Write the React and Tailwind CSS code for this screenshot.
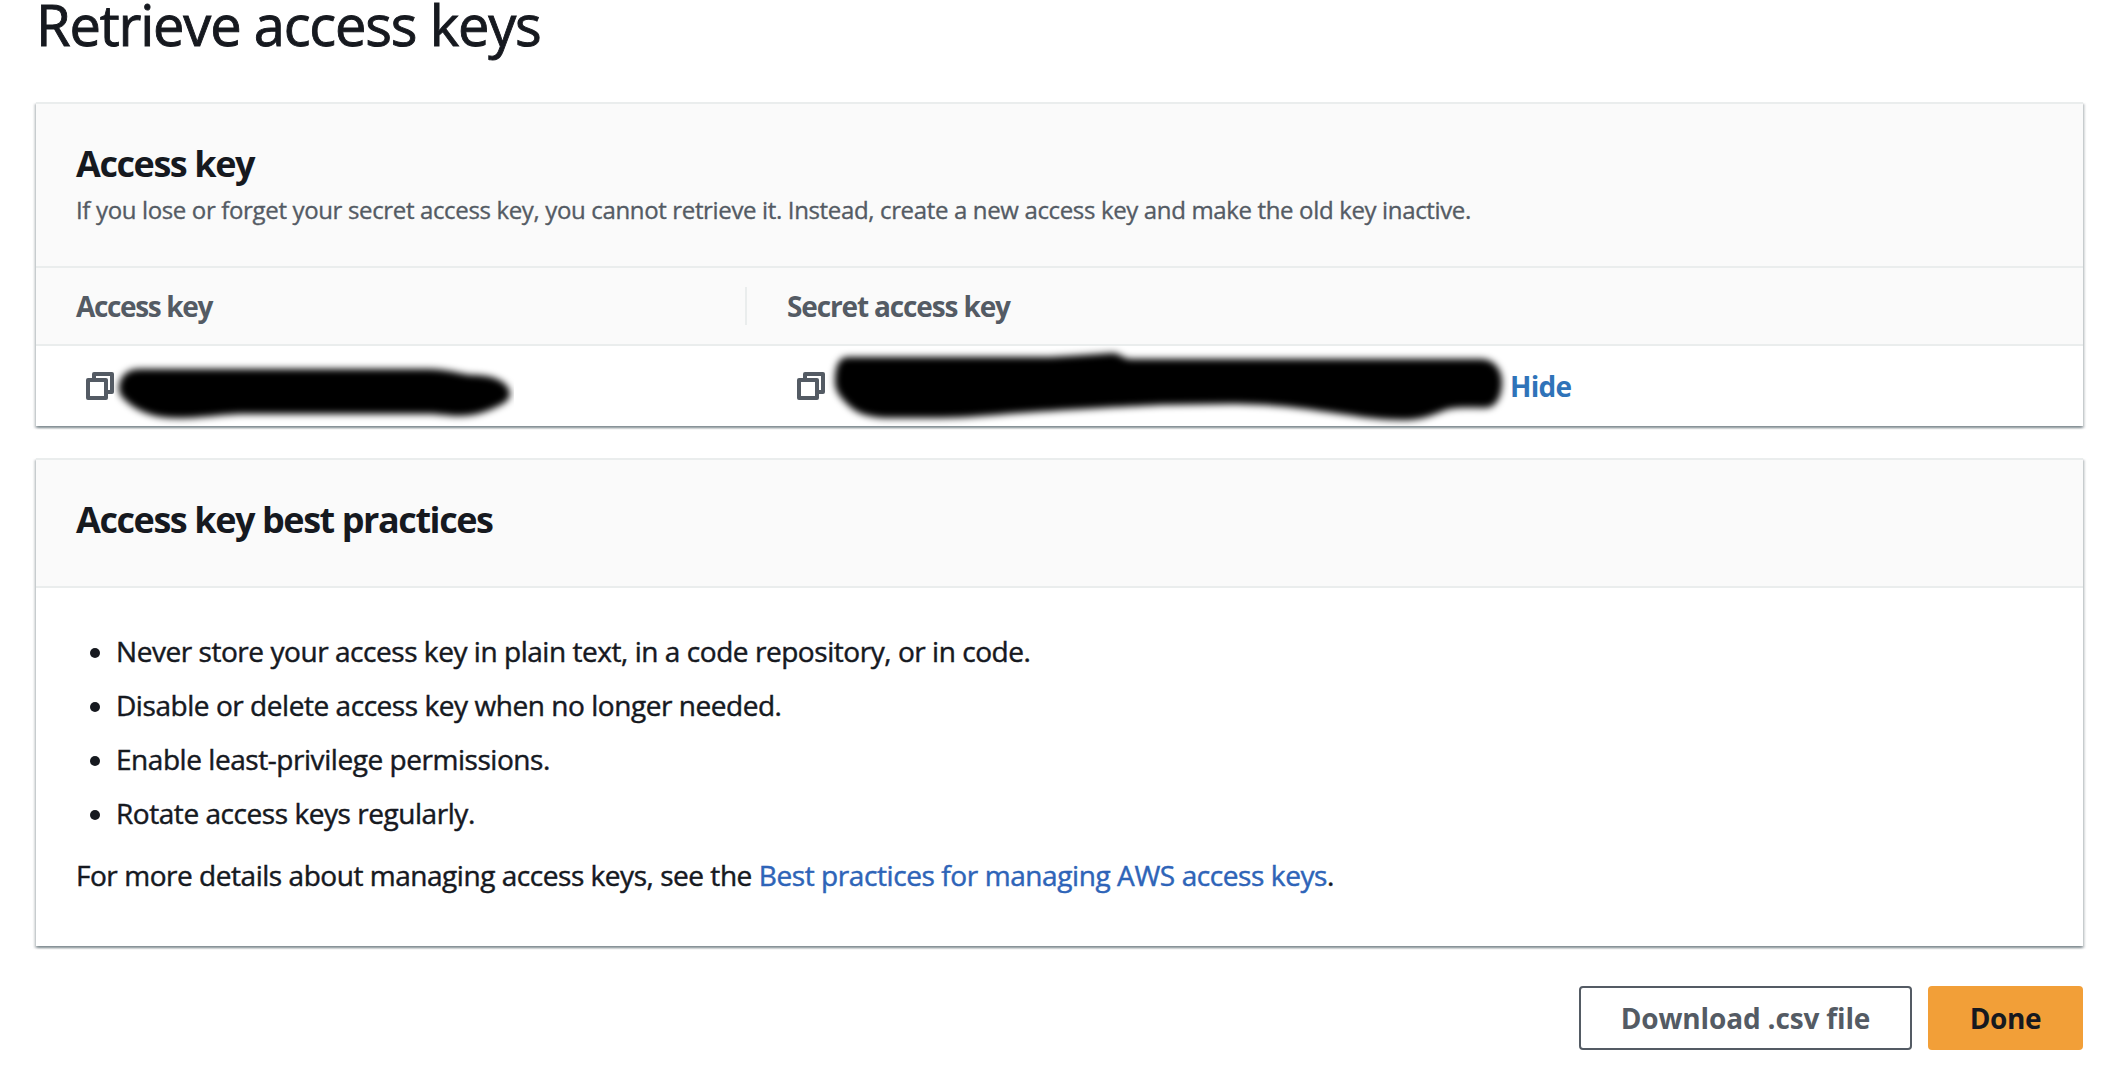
import React from "react";

function CopyIcon() {
  return (
    <svg className="h-7 w-7 shrink-0" viewBox="0 0 28 28" fill="none" stroke="#545b64" strokeWidth="4" strokeLinejoin="round" role="img" aria-label="Copy">
      <path d="M8 7V2h18v18h-5" />
      <rect x="2" y="8" width="18" height="18" />
    </svg>
  );
}

function Card({ children, className = "" }) {
  return (
    <section
      className={
        "border-t-2 border-[#eaeded] bg-white shadow-[0_2px_2px_0_rgba(0,28,36,0.3),2px_2px_2px_0_rgba(0,28,36,0.15),-2px_2px_2px_0_rgba(0,28,36,0.15)] " +
        className
      }
    >
      {children}
    </section>
  );
}

function CardTitle({ children }) {
  return <h2 className="text-[36px] leading-[44px] font-bold tracking-[-1.43px]">{children}</h2>;
}

const practices = [
  "Never store your access key in plain text, in a code repository, or in code.",
  "Disable or delete access key when no longer needed.",
  "Enable least-privilege permissions.",
  "Rotate access keys regularly.",
];

export default function App() {
  return (
    <main className="h-[1078px] overflow-hidden bg-white pr-[25px] pl-9 font-['Open_Sans',sans-serif] text-[28px] whitespace-nowrap text-[#16191f]">
      <h1 className="text-[56px] leading-[48px] tracking-[-1.18px] [-webkit-text-stroke:0.9px]">Retrieve access keys</h1>

      <Card className="mt-[54px]">
        <header className="h-[164px] border-b-2 border-[#eaeded] bg-[#fafafa] px-10 pt-[38px]">
          <CardTitle>Access key</CardTitle>
          <p className="mt-2 text-2xl leading-8 tracking-[-0.35px] text-[#545b64] [-webkit-text-stroke:0.35px]">
            If you lose or forget your secret access key, you cannot retrieve it. Instead, create a new access key and make the old key inactive.
          </p>
        </header>
        <div className="flex h-[78px] items-center border-b-2 border-[#eaeded] bg-[#fafafa] font-bold text-[#545b64]">
          <div className="flex h-[38px] w-[711px] items-center border-r-2 border-[#eaeded] pl-10 tracking-[-1.35px]">Access key</div>
          <div className="pl-10 tracking-[-1.14px]">Secret access key</div>
        </div>
        <div className="flex h-20 items-center">
          <div className="flex w-[711px] items-center pl-[50px]">
            <CopyIcon />
            <svg className="h-20 w-[400px]" viewBox="114 346 400 80" aria-label="Redacted access key" role="img">
              <defs>
                <filter id="soft-a" x="-10%" y="-30%" width="120%" height="160%">
                  <feGaussianBlur stdDeviation="3.8" />
                </filter>
              </defs>
              <path
                filter="url(#soft-a)"
                d="M119 388C119 378 126 369 139 369L430 369C452 370 460 374 472 375C485 375 496 377 504 383C512 390 512 398 504 403C492 410 475 417 455 416C444 415 436 414 422 414L240 414C215 415 195 419 172 418C148 417 133 408 124 399C120 395 119 392 119 388Z"
              />
            </svg>
          </div>
          <div className="flex items-center pl-[50px]">
            <CopyIcon />
            <svg className="h-20 w-[684px]" viewBox="825 346 684 80" aria-label="Redacted secret access key" role="img">
              <defs>
                <filter id="soft-b" x="-10%" y="-30%" width="120%" height="160%">
                  <feGaussianBlur stdDeviation="3.8" />
                </filter>
              </defs>
              <path
                filter="url(#soft-b)"
                d="M835 382C835 370 837 357 848 357L1050 357C1075 356 1095 354 1112 353C1120 353 1122 358 1130 359L1482 359C1495 360 1502 370 1502 382C1502 394 1498 408 1484 408C1470 408 1455 407 1446 410C1434 414 1424 420 1403 420C1375 420 1350 415 1327 412C1300 408 1270 404 1230 404L1160 405C1120 407 1080 409 1020 413C990 415 965 418 940 418L885 418C865 417 855 412 847 404C839 396 835 390 835 382Z"
              />
            </svg>
            <a className="pl-px font-bold tracking-[-0.7px] text-[#2f73b9]">Hide</a>
          </div>
        </div>
      </Card>

      <Card className="mt-8">
        <header className="h-32 border-b-2 border-[#eaeded] bg-[#fafafa] px-10 pt-[38px]">
          <CardTitle>Access key best practices</CardTitle>
        </header>
        <div className="h-[358px] px-10 pt-9 [-webkit-text-stroke:0.45px]">
          <ul className="leading-[54px] tracking-[-0.45px]">
            {practices.map((text) => (
              <li key={text} className="flex items-center pl-3.5">
                <span className="mt-[3px] mr-4 h-2.5 w-2.5 rounded-full bg-[#16191f]" />
                {text}
              </li>
            ))}
          </ul>
          <p className="mt-[15px] leading-10 tracking-[-0.46px]">
            For more details about managing access keys, see the{" "}
            <a className="tracking-[-0.41px] text-[#2e64b8]">Best practices for managing AWS access keys</a>.
          </p>
        </div>
      </Card>

      <footer className="mt-10 flex justify-end gap-4 font-bold">
        <button className="flex h-16 w-[333px] items-center justify-center rounded-[4px] border-2 border-[#545b64] tracking-[-0.15px] text-[#545b64]">
          Download .csv file
        </button>
        <button className="flex h-16 w-[155px] items-center justify-center rounded-[4px] bg-[#f29f38] tracking-[-0.4px]">
          Done
        </button>
      </footer>
    </main>
  );
}
